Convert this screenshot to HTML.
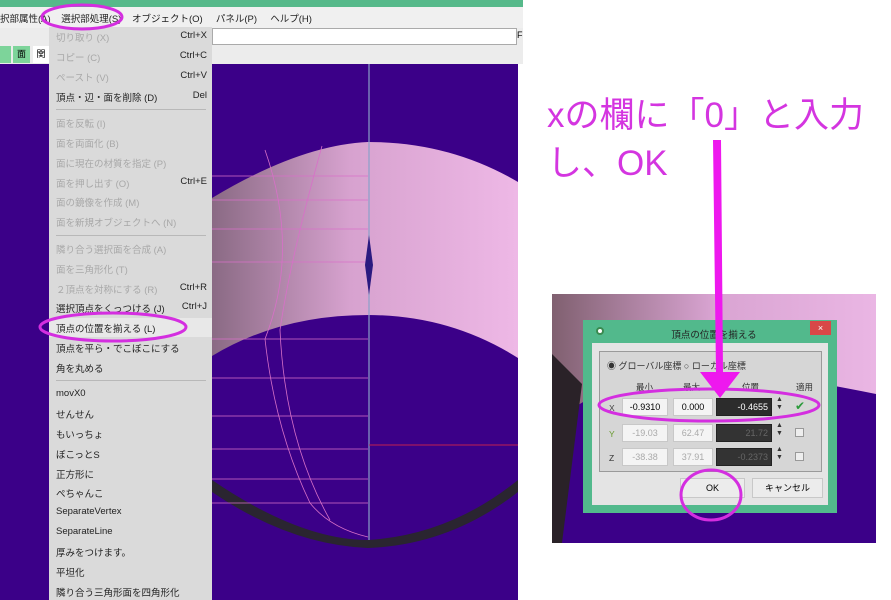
<!DOCTYPE html>
<html><head><meta charset="utf-8"><style>
*{margin:0;padding:0;box-sizing:border-box}
body{width:891px;height:600px;overflow:hidden;background:#fff;position:relative;font-family:"Liberation Sans","Noto Sans CJK JP",sans-serif}
.a{position:absolute}
.mi{position:absolute;left:56px;font-size:9.5px;color:#222;white-space:nowrap}
.dis{color:#a8a8a8}
.sc{position:absolute;right:684px;font-size:9.5px;color:#222}
.sep{position:absolute;left:56px;width:150px;height:1px;background:#b8b8b8}
.dt{position:absolute;font-size:8.5px;color:#333;white-space:nowrap}
.fld{position:absolute;height:18px;background:#f4f4f4;border:1px solid #c8c8c8;font-size:9px;text-align:center;line-height:16px}
</style></head><body>
<!-- left screenshot -->
<div class="a" style="left:0;top:0;width:523px;height:7px;background:#56b98a"></div>
<div class="a" style="left:0;top:7px;width:523px;height:21px;background:#f0f0f0"></div>
<div class="a" style="left:0;top:11px;font-size:9.5px;white-space:nowrap;color:#222">択部属性(A)&nbsp;&nbsp;&nbsp;&nbsp;選択部処理(S)&nbsp;&nbsp;&nbsp;&nbsp;オブジェクト(O)&nbsp;&nbsp;&nbsp;&nbsp;&nbsp;パネル(P)&nbsp;&nbsp;&nbsp;&nbsp;&nbsp;ヘルプ(H)</div>
<div class="a" style="left:0;top:28px;width:523px;height:36px;background:#ececec"></div>
<div class="a" style="left:212px;top:28px;width:305px;height:17px;background:#fff;border:1px solid #aaa"></div>
<div class="a" style="left:517px;top:30px;font-size:9px">F</div>
<div class="a" style="left:0;top:46px;width:11px;height:17px;background:#7dd49a"></div>
<div class="a" style="left:13px;top:46px;width:17px;height:17px;background:#7dd49a;font-size:9px;text-align:center;line-height:17px">面</div>
<div class="a" style="left:33px;top:46px;width:16px;height:17px;background:#fff;font-size:9px;text-align:center;line-height:17px">関</div>
<div class="a" style="left:0;top:64px;width:518px;height:536px;background:#3b0088"></div>
<svg class="a" style="left:0;top:0" width="523" height="600">
<defs><linearGradient id="g" x1="0" x2="1" y1="0" y2="0"><stop offset="0" stop-color="#8a6a84"/><stop offset="0.45" stop-color="#d7a2cf"/><stop offset="1" stop-color="#eeb8e6"/></linearGradient></defs>
<path d="M212 198 Q300 145 368 142 Q450 142 518 182 L518 358 Q450 315 368 315 Q280 315 212 356 Z" fill="url(#g)"/>
<path d="M212 480 Q300 540 368 540 Q450 535 518 480 L518 492 Q450 545 368 548 Q290 545 212 492 Z" fill="#2a2530"/>
<g stroke="#d870c8" stroke-width="0.8" fill="none">
<path d="M212 176 L368 176 M212 200 L368 200 M212 229 L368 229 M212 262 L368 262 M212 339 L368 339 M212 378 L368 378 M212 416 L368 416 M212 449 L368 449 M212 479 L368 479 M212 503 L368 503"/>
<path d="M265 150 Q300 250 265 339 Q275 430 310 503 Q330 528 368 537"/>
<path d="M322 146 Q290 260 280 330 Q285 440 330 520"/>
</g>
<line x1="369" y1="64" x2="369" y2="540" stroke="#8aa0c8" stroke-width="1.2"/>
<line x1="369" y1="445" x2="518" y2="445" stroke="#c02050" stroke-width="1"/>
<path d="M369 235 L373 265 L369 295 L365 265 Z" fill="#2a1a80"/>
</svg>
<!-- menu -->
<div class="a" style="left:49px;top:27px;width:163px;height:573px;background:#dadada"></div>
<div class="a" style="left:49px;top:318px;width:163px;height:19px;background:#e8e8e8"></div>
<div class="mi dis" style="top:30px">切り取り (X)</div><div class="sc dis" style="top:30px">Ctrl+X</div>
<div class="mi dis" style="top:50px">コピー (C)</div><div class="sc dis" style="top:50px">Ctrl+C</div>
<div class="mi dis" style="top:70px">ペースト (V)</div><div class="sc dis" style="top:70px">Ctrl+V</div>
<div class="mi" style="top:90px">頂点・辺・面を削除 (D)</div><div class="sc" style="top:90px">Del</div>
<div class="sep" style="top:109px"></div>
<div class="mi dis" style="top:116px">面を反転 (I)</div>
<div class="mi dis" style="top:136px">面を両面化 (B)</div>
<div class="mi dis" style="top:156px">面に現在の材質を指定 (P)</div>
<div class="mi dis" style="top:176px">面を押し出す (O)</div><div class="sc dis" style="top:176px">Ctrl+E</div>
<div class="mi dis" style="top:195px">面の鏡像を作成 (M)</div>
<div class="mi dis" style="top:215px">面を新規オブジェクトへ (N)</div>
<div class="sep" style="top:235px"></div>
<div class="mi dis" style="top:242px">隣り合う選択面を合成 (A)</div>
<div class="mi dis" style="top:262px">面を三角形化 (T)</div>
<div class="mi dis" style="top:282px">２頂点を対称にする (R)</div><div class="sc dis" style="top:282px">Ctrl+R</div>
<div class="mi" style="top:301px">選択頂点をくっつける (J)</div><div class="sc" style="top:301px">Ctrl+J</div>
<div class="mi" style="top:321px">頂点の位置を揃える (L)</div>
<div class="mi" style="top:341px">頂点を平ら・でこぼこにする</div>
<div class="mi" style="top:361px">角を丸める</div>
<div class="sep" style="top:380px"></div>
<div class="mi" style="top:388px">movX0</div>
<div class="mi" style="top:407px">せんせん</div>
<div class="mi" style="top:427px">もいっちょ</div>
<div class="mi" style="top:447px">ぼこっとS</div>
<div class="mi" style="top:467px">正方形に</div>
<div class="mi" style="top:486px">ぺちゃんこ</div>
<div class="mi" style="top:506px">SeparateVertex</div>
<div class="mi" style="top:526px">SeparateLine</div>
<div class="mi" style="top:545px">厚みをつけます。</div>
<div class="mi" style="top:565px">平坦化</div>
<div class="mi" style="top:585px">隣り合う三角形面を四角形化</div>
<!-- right text -->
<div class="a" style="left:547px;top:92px;font-size:35px;color:#d435e0;white-space:nowrap;line-height:48px">xの欄に「0」と入力<br>し、OK</div>
<!-- dialog screenshot -->
<div class="a" style="left:552px;top:294px;width:324px;height:249px;overflow:hidden;background:#3b0088">
 <svg class="a" style="left:0;top:0" width="324" height="249">
  <defs><linearGradient id="g2" x1="0" x2="1"><stop offset="0" stop-color="#806070"/><stop offset="0.5" stop-color="#d9a4d2"/><stop offset="1" stop-color="#eab6e4"/></linearGradient></defs>
  <path d="M0 0 L324 0 L324 100 Q250 85 150 70 Q60 80 0 130 Z" fill="url(#g2)"/>
  <path d="M0 60 L30 90 L10 249 L0 249 Z" fill="#2a2228"/>
 </svg>
 <div class="a" style="left:31px;top:26px;width:254px;height:193px;background:#52b98c"></div>
 <div class="a" style="left:44px;top:33px;width:8px;height:8px;border-radius:50%;background:#fff;border:2px solid #3a8a50"></div>
 <div class="a" style="left:0;top:33px;width:324px;text-align:center;font-size:9.5px;color:#222">頂点の位置を揃える</div>
 <div class="a" style="left:258px;top:27px;width:21px;height:14px;background:#d84848;color:#fff;font-size:9px;text-align:center;line-height:14px">×</div>
 <div class="a" style="left:40px;top:49px;width:236px;height:162px;background:#e4e4e4"></div>
 <div class="a" style="left:47px;top:57px;width:223px;height:121px;background:#d6d6d6;border:1px solid #9a9a9a"></div>
 <div class="dt" style="left:55px;top:65px;font-size:9px">◉ グローバル座標 ○ ローカル座標</div>
 <div class="dt" style="left:84px;top:87px">最小</div><div class="dt" style="left:131px;top:87px">最大</div><div class="dt" style="left:190px;top:87px">位置</div><div class="dt" style="left:244px;top:87px">適用</div>
 <div class="dt" style="left:57px;top:109px;color:#444">X</div>
 <div class="fld" style="left:70px;top:104px;width:46px">-0.9310</div>
 <div class="fld" style="left:121px;top:104px;width:40px">0.000</div>
 <div class="fld" style="left:164px;top:104px;width:56px;background:#2c2c2c;color:#fff;text-align:right;padding-right:3px;border-color:#222">-0.4655</div>
 <div class="dt" style="left:224px;top:102px;font-size:7px;line-height:8px">▲<br>▼</div>
 <div class="dt" style="left:243px;top:105px;color:#2a9a3a;font-size:12px">✔</div>
 <div class="dt" style="left:57px;top:135px;color:#6a9a30">Y</div>
 <div class="fld" style="left:70px;top:130px;width:46px;color:#aaa">-19.03</div>
 <div class="fld" style="left:121px;top:130px;width:40px;color:#aaa">62.47</div>
 <div class="fld" style="left:164px;top:130px;width:56px;background:#333;color:#666;text-align:right;padding-right:3px;border-color:#222">21.72</div>
 <div class="dt" style="left:224px;top:128px;font-size:7px;line-height:8px">▲<br>▼</div>
 <div class="a" style="left:243px;top:134px;width:9px;height:9px;background:#eee;border:1px solid #999"></div>
 <div class="dt" style="left:57px;top:159px;color:#333">Z</div>
 <div class="fld" style="left:70px;top:154px;width:46px;color:#aaa">-38.38</div>
 <div class="fld" style="left:121px;top:154px;width:40px;color:#aaa">37.91</div>
 <div class="fld" style="left:164px;top:154px;width:56px;background:#333;color:#666;text-align:right;padding-right:3px;border-color:#222">-0.2373</div>
 <div class="dt" style="left:224px;top:152px;font-size:7px;line-height:8px">▲<br>▼</div>
 <div class="a" style="left:243px;top:158px;width:9px;height:9px;background:#eee;border:1px solid #999"></div>
 <div class="fld" style="left:128px;top:184px;width:65px;height:20px;background:#ececec;line-height:18px">OK</div>
 <div class="fld" style="left:200px;top:184px;width:71px;height:20px;background:#ececec;line-height:18px">キャンセル</div>
</div>
<!-- annotations -->
<svg class="a" style="left:0;top:0" width="891" height="600">
 <g fill="none" stroke="#d42ee0" stroke-width="3">
  <ellipse cx="82" cy="17" rx="40" ry="12"/>
  <ellipse cx="113" cy="327" rx="73" ry="14"/>
  <ellipse cx="709" cy="405" rx="110" ry="16"/>
  <ellipse cx="711" cy="495" rx="30" ry="25"/>
 </g>
 <path d="M713 140 L721 140 L723 372 L740 372 L720 398 L700 372 L716 372 Z" fill="#ee18ee"/>
</svg>
</body></html>
